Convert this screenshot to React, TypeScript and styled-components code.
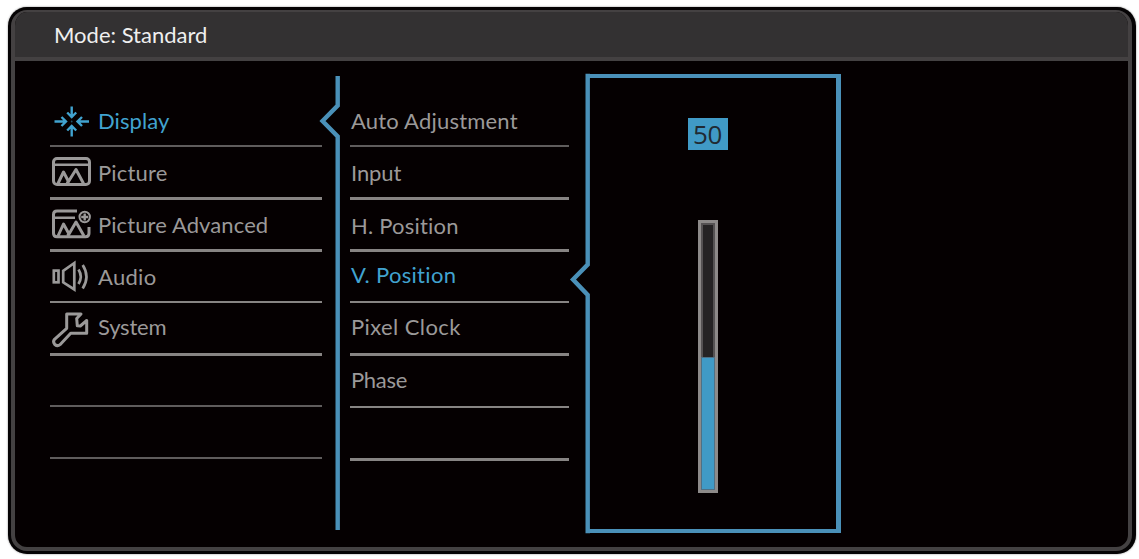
import React from 'react';
import styled, { createGlobalStyle } from 'styled-components';

const GlobalStyle = createGlobalStyle`
  body {
    margin: 0;
    background: #fff;
    font-family: Lato, 'Open Sans', sans-serif;
  }
`;

const BLUE = '#4a90b8';
const BRIGHT_BLUE = '#409ac6';
const GREY = '#8d8a89';

const Screen = styled.div`
  box-sizing: border-box;
  width: 1139px;
  height: 559px;
  padding: 7px 3px 5px 8px;
`;

const Bezel = styled.div`
  box-sizing: border-box;
  height: 100%;
  padding: 3px 4px 3px 3px;
  border-radius: 19px;
  background: #050304;
  box-shadow: 0 0 2px rgba(0, 0, 0, 0.5);
`;

const Frame = styled.div`
  box-sizing: border-box;
  display: flex;
  flex-direction: column;
  height: 100%;
  border: 4px solid #444142;
  border-top-width: 2px;
  border-radius: 16px;
  background: #050001;
  overflow: hidden;
`;

const Header = styled.header`
  box-sizing: border-box;
  flex: none;
  height: 49px;
  padding: 10px 0 0 39px;
  border-bottom: 4px solid #444142;
  background: #333132;
  color: #efefef;
  font-size: 22px;
  line-height: 26px;
`;

const Body = styled.div`
  display: grid;
  grid-template-columns: 272px 28px 219px 1px 255px;
  padding: 13px 0 0 35px;
`;

const Menu = styled.nav`
  display: flex;
  flex-direction: column;
  padding-top: 21px;
`;

const MenuRow = styled.div<{
  $height: number;
  $line: number;
  $lift: number;
  $dim?: boolean;
  $active?: boolean;
}>`
  box-sizing: border-box;
  display: flex;
  align-items: flex-end;
  height: ${({ $height }) => $height}px;
  padding: 0 0 ${({ $lift }) => $lift}px 1px;
  border-bottom: ${({ $line }) => $line}px solid ${({ $dim }) => ($dim ? '#5f5c5c' : '#878483')};
  color: ${({ $active }) => ($active ? '#41a3d0' : '#9b9999')};
`;

const IconSlot = styled.span`
  flex: none;
  width: 47px;
  height: 36px;
  margin-bottom: -5px;

  svg {
    display: block;
    overflow: visible;
  }
`;

const Label = styled.span<{ $spacing: number }>`
  font-size: 22px;
  line-height: 26px;
  white-space: nowrap;
  letter-spacing: ${({ $spacing }) => $spacing}px;
`;

const Divider = styled.div`
  svg {
    display: block;
    overflow: visible;
  }
`;

const Panel = styled.section`
  display: flex;
  height: 459px;
`;

const PanelEdge = styled.div`
  flex: none;
  width: 20px;
  margin-right: -3px;

  svg {
    display: block;
    overflow: visible;
  }
`;

const PanelContent = styled.div`
  box-sizing: border-box;
  flex: none;
  display: flex;
  flex-direction: column;
  align-items: center;
  width: 254px;
  padding: 40px 8px 0 0;
  border: 5px solid ${BLUE};
  border-width: 4px 5px 4px 0;
`;

const Value = styled.output`
  width: 40px;
  height: 32px;
  background: ${BRIGHT_BLUE};
  color: #202a33;
  font: 26px/32px 'Open Sans', sans-serif;
  letter-spacing: -0.4px;
  text-align: center;
`;

const Track = styled.div`
  box-sizing: border-box;
  display: flex;
  flex-direction: column;
  justify-content: flex-end;
  width: 20px;
  height: 273px;
  margin-top: 70px;
  border: 3px solid ${GREY};
  background: #252324;
  box-shadow: inset 0 0 0 2px #555253;
`;

const Fill = styled.div`
  box-sizing: border-box;
  border: 1px solid #4e7085;
  background: ${BRIGHT_BLUE};
`;

const iconProps = {
  width: 42,
  height: 36,
  viewBox: '0 0 42 36',
  fill: 'none',
  stroke: 'currentColor',
};

// Four arrows pointing at the centre
const DisplayIcon = () => (
  <svg {...iconProps} strokeWidth="2.4">
    <path d="M3.5 18.5H15M10.5 14l4.5 4.5-4.5 4.5" />
    <path d="M38 18.5H26.5M31 14l-4.5 4.500 4.500 4.500" />
    <path d="M20.700 3.500v10.500M16.200 9.500l4.500 4.500 4.500-4.500" />
    <path d="M20.700 33.500V23M16.200 27.500l4.500-4.500 4.500 4.500" />
    <circle cx="20.700" cy="18.500" r="0.900" fill="currentColor" stroke="none" opacity="0.5" />
  </svg>
);

const PictureIcon = () => (
  <svg {...iconProps} strokeWidth="3" strokeLinejoin="round">
    <rect x="2.500" y="3.500" width="36" height="26" rx="3.500" />
    <path d="M3 9.700h35" strokeWidth="2.400" />
    <path d="M7 28.500l5.500-11.500 5 9.500L25 14.500l7.500 14" />
    <path d="M17.500 26.500l-1.500 2" />
  </svg>
);

const PictureAdvancedIcon = () => (
  <svg {...iconProps} strokeWidth="3" strokeLinejoin="round">
    <path d="M26 4H6Q2.500 4 2.500 7.500v18.700q0 3.500 3.500 3.500h28.500q3.500 0 3.500-3.500V20" />
    <path d="M3 10.700h21" strokeWidth="2.400" />
    <path d="M7 29l5.500-12 5.500 10L25 15l8 14" />
    <path d="M18 27l-1.500 2" />
    <circle cx="33.700" cy="10" r="5.200" strokeWidth="2" />
    <path d="M33.700 6.500v7M30.200 10h7" strokeWidth="2.400" />
  </svg>
);

const AudioIcon = () => (
  <svg {...iconProps} strokeWidth="2.700">
    <rect x="2.800" y="11.600" width="4.700" height="11.700" />
    <path d="M12.200 11.800L23.300 4v26.500L12.200 23.300z" />
    <path d="M27.500 10.500q4.500 7 0 14.500M31.700 6q7.500 11.500 0 23.500" />
  </svg>
);

const SystemIcon = () => (
  <svg {...iconProps} strokeWidth="3" strokeLinejoin="round">
    <path d="M15.700 5H30l-4.300 4.500.6 7.300 3 .2 6.400-5.500v12.800h-16L9 35.700q-2.500 2-5.200-.2-2.300-2.700-.3-5.200L15.700 19.300z" />
  </svg>
);

interface Row {
  label?: string;
  icon?: React.ReactNode;
  spacing?: number;
  height: number;
  line: number;
  lift: number;
  dim?: boolean;
  active?: boolean;
}

const mainMenu: Row[] = [
  { label: 'Display', icon: <DisplayIcon />, spacing: 0.1, height: 52, line: 2, lift: 11, dim: true, active: true },
  { label: 'Picture', icon: <PictureIcon />, spacing: 0.2, height: 53, line: 3, lift: 11 },
  { label: 'Picture Advanced', icon: <PictureAdvancedIcon />, spacing: 0.1, height: 52, line: 3, lift: 11 },
  { label: 'Audio', icon: <AudioIcon />, spacing: 0.3, height: 51, line: 2, lift: 11 },
  { label: 'System', icon: <SystemIcon />, spacing: -0.2, height: 53, line: 3, lift: 13 },
  { height: 51, line: 2, lift: 0, dim: true },
  { height: 52, line: 2, lift: 0, dim: true },
];

const displayMenu: Row[] = [
  { label: 'Auto Adjustment', spacing: 0.2, height: 52, line: 2, lift: 11, dim: true },
  { label: 'Input', spacing: -0.1, height: 53, line: 3, lift: 11 },
  { label: 'H. Position', spacing: 0.2, height: 52, line: 3, lift: 10 },
  { label: 'V. Position', spacing: 0.3, height: 51, line: 2, lift: 13, active: true },
  { label: 'Pixel Clock', spacing: 0.4, height: 53, line: 3, lift: 13 },
  { label: 'Phase', spacing: -0.3, height: 52, line: 2, lift: 13 },
  { height: 53, line: 3, lift: 0 },
];

const MenuList: React.FC<{ rows: Row[] }> = ({ rows }) => (
  <Menu>
    {rows.map((row, i) => (
      <MenuRow
        key={i}
        $height={row.height}
        $line={row.line}
        $lift={row.lift}
        $dim={row.dim}
        $active={row.active}
      >
        {row.icon && <IconSlot>{row.icon}</IconSlot>}
        {row.label && <Label $spacing={row.spacing || 0}>{row.label}</Label>}
      </MenuRow>
    ))}
  </Menu>
);

const App: React.FC = () => {
  const value = 50;

  return (
    <>
      <GlobalStyle />
      <Screen>
        <Bezel>
          <Frame>
            <Header>Mode: Standard</Header>
            <Body>
              <MenuList rows={mainMenu} />
              <Divider>
                <svg width="28" height="457" viewBox="0 0 28 457" fill="none" stroke={BLUE} strokeWidth="4.400">
                  <path d="M15.700 2v29.500L0.500 47l15.200 15.500V456" />
                </svg>
              </Divider>
              <MenuList rows={displayMenu} />
              <span />
              <Panel>
                <PanelEdge>
                  <svg width="20" height="459" viewBox="0 0 20 459" fill="none" stroke={BLUE} strokeWidth="4.400">
                    <path d="M20 2H17.700V190.500L3 205.500l14.700 15.500V457H20" />
                  </svg>
                </PanelEdge>
                <PanelContent>
                  <Value>{value}</Value>
                  <Track>
                    <Fill style={{ height: `${value}%` }} />
                  </Track>
                </PanelContent>
              </Panel>
            </Body>
          </Frame>
        </Bezel>
      </Screen>
    </>
  );
};

export default App;
